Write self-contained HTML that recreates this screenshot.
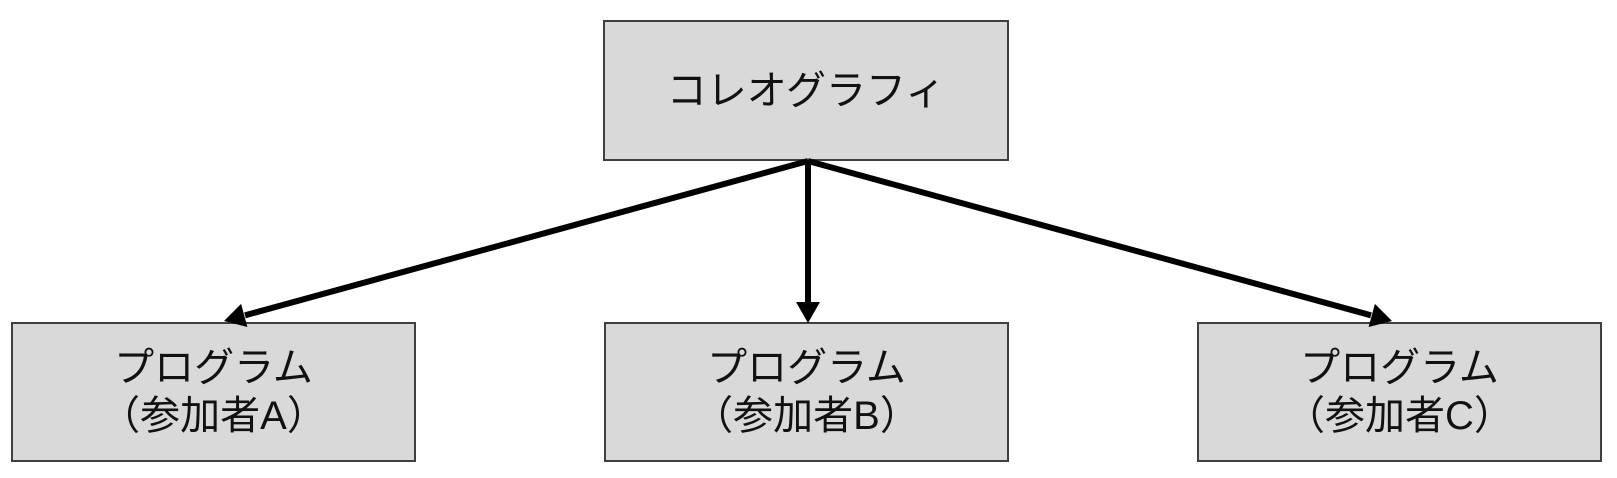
<!DOCTYPE html>
<html><head><meta charset="utf-8"><style>
body{margin:0;width:1617px;height:478px;background:#fff;position:relative;overflow:hidden;font-family:"Liberation Sans","Noto Sans CJK JP",sans-serif;}
.b{position:absolute;background:#d9d9d9;border:2px solid #3f3f3f;box-sizing:border-box;display:flex;align-items:center;justify-content:center;text-align:center;font-size:40px;line-height:48px;color:#111;}
</style></head><body>
<div class="b" style="left:603px;top:20px;width:406px;height:141px;">コレオグラフィ</div>
<div class="b" style="left:11px;top:322px;width:405px;height:140px;">プログラム<br>（参加者A）</div>
<div class="b" style="left:604px;top:322px;width:405px;height:140px;">プログラム<br>（参加者B）</div>
<div class="b" style="left:1197px;top:322px;width:405px;height:140px;">プログラム<br>（参加者C）</div>
<svg width="1617" height="478" style="position:absolute;left:0;top:0">
<g stroke="#000" stroke-width="6" fill="none">
<line x1="808" y1="161" x2="245" y2="315.3"/>
<line x1="808" y1="161" x2="808" y2="303"/>
<line x1="808" y1="161" x2="1371" y2="315.3"/>
</g>
<g fill="#000">
<polygon points="224,321 247.4,327 241.1,303.9"/>
<polygon points="796,302 820,302 808,323"/>
<polygon points="1392,321 1368.6,327 1374.9,303.9"/>
</g></svg>
</body></html>
